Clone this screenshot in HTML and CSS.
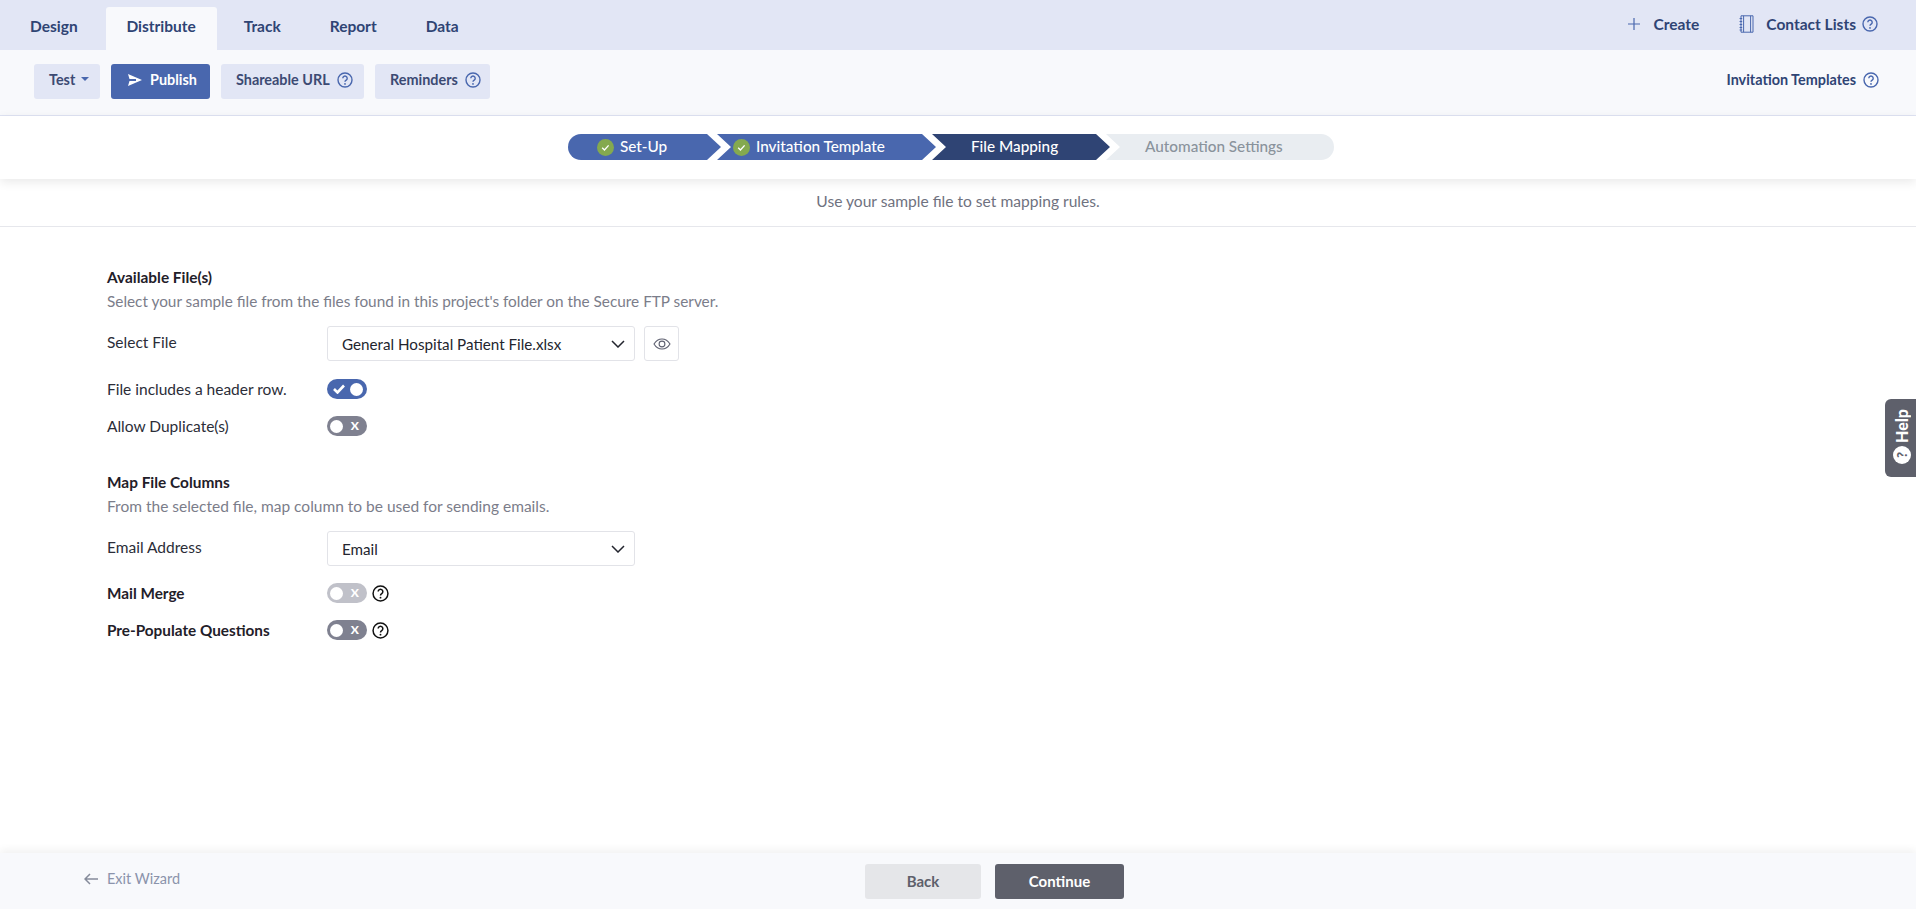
FILE: index.html
```html
<!DOCTYPE html>
<html lang="en">
<head>
<meta charset="utf-8">
<title>File Mapping</title>
<link rel="stylesheet" href="styles.css">
</head>
<body>
<svg class="defs" width="0" height="0" aria-hidden="true">
  <symbol id="q" viewBox="0 0 16 16">
    <circle cx="8" cy="8" r="7" fill="none" stroke="currentColor" stroke-width="1.4"/>
    <path d="M5.8 6.2a2.2 2.2 0 1 1 3.4 1.9c-.8.5-1.200.9-1.200 1.700" fill="none" stroke="currentColor" stroke-width="1.400"/>
    <circle cx="8" cy="11.900" r=".9" fill="currentColor"/>
  </symbol>
  <symbol id="chev" viewBox="0 0 14 8">
    <path d="M1 1l6 6 6-6" fill="none" stroke="currentColor" stroke-width="1.500"/>
  </symbol>
  <symbol id="ok" viewBox="0 0 18 18">
    <circle cx="9" cy="9" r="9" fill="#84a94f"/>
    <path d="M5.500 9.300l2.400 2.400 4.400-5" fill="none" stroke="#fff" stroke-width="1.400"/>
  </symbol>
</svg>

<header class="topbar">
  <nav class="tabs">
    <a class="tab">Design</a>
    <a class="tab tab-active">Distribute</a>
    <a class="tab">Track</a>
    <a class="tab">Report</a>
    <a class="tab">Data</a>
  </nav>
  <div class="top-actions">
    <a class="top-link">
      <svg class="ico-plus" viewBox="0 0 14 14"><path d="M7 1v12M1 7h12" stroke="currentColor" stroke-width="1.200" fill="none"/></svg>
      <span>Create</span>
    </a>
    <a class="top-link top-contact">
      <svg class="ico-book" viewBox="0 0 15 18"><path d="M2 .8h12v16.400H2zM4.600.8v16.400M11.600.8v16.400M.6 3.500h2.600M.6 6.500h2.600M.6 9.500h2.600M.6 12.500h2.600M.6 15h2.600" stroke="currentColor" stroke-width="1" fill="none"/></svg>
      <span>Contact Lists</span>
      <svg class="q q-blue q-tight"><use href="#q"/></svg>
    </a>
  </div>
</header>

<section class="toolbar">
  <div class="tool-group">
    <button class="btn btn-soft btn-test">Test<i class="caret"></i></button>
    <button class="btn btn-primary">
      <svg class="ico-send" viewBox="0 0 14 12"><path d="M0 0l14 6-14 6 1.500-5H8V5H1.500z" fill="currentColor"/></svg>
      Publish
    </button>
    <button class="btn btn-soft btn-share">Shareable URL<svg class="q q-blue"><use href="#q"/></svg></button>
    <button class="btn btn-soft btn-remind">Reminders<svg class="q q-blue"><use href="#q"/></svg></button>
  </div>
  <a class="tpl-link">Invitation Templates<svg class="q q-blue"><use href="#q"/></svg></a>
</section>

<section class="stepper-wrap">
  <ol class="stepper">
    <li class="step step-first step-done step-a"><svg class="ok"><use href="#ok"/></svg>Set-Up</li>
    <li class="step step-done step-b"><svg class="ok"><use href="#ok"/></svg>Invitation Template</li>
    <li class="step step-current step-c">File Mapping</li>
    <li class="step step-last step-todo step-d">Automation Settings</li>
  </ol>
</section>

<p class="subtitle">Use your sample file to set mapping rules.</p>

<main class="content">
  <h2 class="sec-title">Available File(s)</h2>
  <p class="sec-desc">Select your sample file from the files found in this project's folder on the Secure FTP server.</p>
  <div class="row row-select">
    <label class="lbl">Select File</label>
    <div class="select"><span>General Hospital Patient File.xlsx</span><svg class="chev"><use href="#chev"/></svg></div>
    <button class="eye-btn">
      <svg class="eye" viewBox="0 0 18 12"><path d="M1 6c2-3.300 4.800-5 8-5s6 1.700 8 5c-2 3.300-4.800 5-8 5s-6-1.700-8-5z" fill="none" stroke="currentColor" stroke-width="1.100"/><circle cx="9" cy="6" r="2.900" fill="none" stroke="currentColor" stroke-width="1.100"/></svg>
    </button>
  </div>
  <div class="row row-toggle">
    <label class="lbl">File includes a header row.</label>
    <span class="toggle toggle-on"><svg class="tick" viewBox="0 0 12 10"><path d="M1 5l3.500 3.500L11 1.500" fill="none" stroke="currentColor" stroke-width="2.600"/></svg><i class="knob"></i></span>
  </div>
  <div class="row row-toggle row-dup">
    <label class="lbl">Allow Duplicate(s)</label>
    <span class="toggle toggle-off"><i class="knob"></i><b class="x">X</b></span>
  </div>

  <h2 class="sec-title sec-second">Map File Columns</h2>
  <p class="sec-desc sec-desc-b">From the selected file, map column to be used for sending emails.</p>
  <div class="row row-select">
    <label class="lbl">Email Address</label>
    <div class="select"><span>Email</span><svg class="chev"><use href="#chev"/></svg></div>
  </div>
  <div class="row row-toggle row-merge">
    <label class="lbl lbl-strong">Mail Merge</label>
    <span class="toggle toggle-off toggle-disabled"><i class="knob"></i><b class="x">X</b></span>
    <svg class="q q-black"><use href="#q"/></svg>
  </div>
  <div class="row row-toggle row-dup">
    <label class="lbl lbl-strong">Pre-Populate Questions</label>
    <span class="toggle toggle-off"><i class="knob"></i><b class="x">X</b></span>
    <svg class="q q-black"><use href="#q"/></svg>
  </div>
</main>

<footer class="footer">
  <a class="exit">
    <svg class="ico-back" viewBox="0 0 14 12"><path d="M6 1L1 6l5 5M1 6h13" fill="none" stroke="currentColor" stroke-width="1.500"/></svg>
    Exit Wizard
  </a>
  <div class="foot-btns">
    <button class="foot-btn foot-back">Back</button>
    <button class="foot-btn foot-next">Continue</button>
  </div>
</footer>

<aside class="help"><span class="help-q">?</span><span class="help-t">Help</span></aside>
</body>
</html>
```

FILE: styles.css
```css
* { box-sizing: border-box; }
html, body { height: 100%; }
body {
  margin: 0;
  display: flex;
  flex-direction: column;
  height: 909px;
  overflow: hidden;
  background: #fff;
  font-family: "Lato", "Liberation Sans", sans-serif;
  font-size: 15px;
  color: #2b2d38;
}
.defs { position: absolute; }
button { font-family: inherit; border: 0; cursor: pointer; }
h2, p, ol { margin: 0; padding: 0; }

.topbar {
  height: 50px;
  flex: none;
  display: flex;
  justify-content: space-between;
  background: #e2e6f5;
  padding-left: 8px;
  color: #2f4474;
}
.tabs { display: flex; gap: 5px; padding-top: 7px; }
.tab {
  display: flex;
  align-items: center;
  height: 43px;
  padding: 0 22px 6px;
  font-weight: 700;
  font-size: 15.5px;
  color: #2f4474;
  border-radius: 3px 3px 0 0;
}
.tab:first-child { padding-right: 23px; }
.tab-active { background: #f8f9fc; width: 111px; justify-content: center; padding: 0 0 6px; }
.top-actions { display: flex; align-items: center; padding: 0 38px 2px 0; gap: 40px; }
.top-link { display: flex; align-items: center; font-weight: 700; font-size: 15.5px; color: #2f4474; }
.ico-plus { width: 14px; height: 14px; margin-right: 13px; color: #4967ae; }
.ico-book { width: 15px; height: 18px; margin-right: 12px; color: #4967ae; }
.q { width: 16px; height: 16px; flex: none; }
.q-blue { color: #4967ae; margin-left: 7px; }
.q-tight { margin-left: 6px; }
.q-black { color: #111; width: 17px; height: 17px; margin-left: 5px; }

.toolbar {
  height: 66px;
  flex: none;
  display: flex;
  align-items: flex-start;
  justify-content: space-between;
  background: #f8f9fc;
  border-bottom: 1px solid #dfe3f3;
  padding: 14px 37px 0 34px;
  color: #2f4474;
}
.tool-group { display: flex; gap: 11px; }
.btn {
  display: flex;
  align-items: center;
  height: 35px;
  padding: 0 14px 4px 15px;
  border-radius: 3px;
  font-size: 14.400px;
  font-weight: 700;
  white-space: nowrap;
}
.btn-soft { background: #e2e6f5; color: #3c4a73; }
.btn-share { width: 143px; }
.btn-remind { width: 115px; }
.btn-test { width: 66px; padding-left: 15px; padding-bottom: 5px; }
.caret {
  width: 0; height: 0;
  margin-left: 6px;
  border-left: 4px solid transparent;
  border-right: 4px solid transparent;
  border-top: 4px solid #4967ae;
}
.btn-primary { background: #4967ae; color: #fff; width: 99px; padding: 0 0 4px 17px; }
.ico-send { width: 14px; height: 12px; margin-right: 8px; }
.tpl-link { display: flex; align-items: center; height: 35px; padding-bottom: 4px; font-size: 14.400px; font-weight: 700; color: #2f4474; }

.stepper-wrap {
  height: 63px;
  flex: none;
  position: relative;
  padding: 18px 14px 0 0;
  box-shadow: 0 3px 10px rgba(0,0,0,.09);
  background: #fff;
}
.stepper { list-style: none; display: flex; justify-content: center; }
.step {
  display: flex;
  align-items: center;
  height: 26px;
  padding-bottom: 2px;
  font-size: 15.300px;
  font-weight: 500;
  color: #fff;
  --tip: 14px;
  clip-path: polygon(0 0, calc(100% - var(--tip)) 0, 100% 50%, calc(100% - var(--tip)) 100%, 0 100%, var(--tip) 50%);
  margin-left: -4px;
}
.step-first {
  margin-left: 0;
  border-radius: 13px 0 0 13px;
  clip-path: polygon(0 0, calc(100% - var(--tip)) 0, 100% 50%, calc(100% - var(--tip)) 100%, 0 100%);
}
.step-last { background: #e9edf1; border-radius: 0 13px 13px 0; }
.step-done { background: #4967ae; }
.step-current { background: #2f4474; }
.step-todo { color: #8a939c; }
.step-a { width: 153px; padding-left: 29px; }
.step-b { width: 219px; padding-left: 16px; }
.step-c { width: 178px; padding-left: 39px; }
.step-d {
  width: 228px;
  padding-left: 39px;
  clip-path: polygon(0 0, 100% 0, 100% 100%, 0 100%, var(--tip) 50%);
}
.ok { width: 17px; height: 17px; margin: 2px 6px 0 0; }

.subtitle {
  height: 48px;
  flex: none;
  display: flex;
  align-items: center;
  justify-content: center;
  padding-bottom: 3px;
  border-bottom: 1px solid #e6e7ec;
  color: #6f7280;
  font-size: 15.600px;
}

.content { flex: 1; padding: 40px 0 0 107px; }
.sec-title { font-size: 15.400px; font-weight: 700; color: #1f2029; line-height: 20px; }
.sec-second { margin-top: 36px; }
.sec-desc { margin-top: 4px; color: #7b7d8a; font-size: 15.350px; line-height: 20px; }
.sec-desc-b { font-size: 15.500px; }
.row { display: flex; align-items: center; }
.lbl { width: 220px; flex: none; font-size: 15.500px; color: #2b2d38; }
.lbl-strong { font-weight: 700; color: #1f2029; font-size: 15.300px; }
.row-select { margin-top: 15px; }
.row-select .lbl { align-self: flex-start; padding-top: 7px; }
.select {
  width: 308px;
  height: 35px;
  display: flex;
  align-items: center;
  justify-content: space-between;
  padding: 0 9px 0 14px;
  background: #fff;
  border: 1px solid #e2e3e8;
  border-radius: 3px;
  font-size: 15.200px;
  color: #23252e;
}
.chev { width: 14px; height: 8px; color: #23252e; }
.eye-btn {
  width: 35px; height: 35px;
  margin-left: 9px;
  padding: 0;
  display: flex;
  align-items: center;
  justify-content: center;
  background: #fff;
  border: 1px solid #e2e3e8;
  border-radius: 3px;
  color: #5e6070;
}
.eye { width: 18px; height: 12px; }
.row-toggle { margin-top: 18px; height: 20px; }
.row-dup { margin-top: 17px; }
.row-merge { margin-top: 17px; }
.toggle {
  position: relative;
  width: 40px;
  height: 20px;
  flex: none;
  display: flex;
  align-items: center;
  justify-content: space-between;
  border-radius: 10px;
  color: #fff;
}
.toggle-on { background: #4967ae; padding: 0 4px 0 6px; }
.toggle-off { background: #7f8190; padding: 0 8px 0 3px; }
.toggle-disabled { background: #c0c1c9; }
.knob { width: 13px; height: 13px; border-radius: 50%; background: #fff; display: block; flex: none; }
.tick { width: 12px; height: 10px; }
.x { font-size: 12px; font-weight: 900; line-height: 1; }

.footer {
  height: 56px;
  flex: none;
  display: grid;
  grid-template-columns: 1fr auto 1fr;
  align-items: center;
  background: #f8f9fc;
  box-shadow: 0 -3px 8px rgba(0,0,0,.06);
  padding: 0 11px 0 84px;
}
.exit { display: flex; align-items: center; color: #8b93ab; font-size: 14.500px; padding-bottom: 5px; }
.ico-back { width: 14px; height: 12px; margin-right: 9px; color: #858b9a; }
.foot-btns { display: flex; gap: 14px; }
.foot-btn { height: 35px; border-radius: 3px; font-size: 15px; font-weight: 700; }
.foot-back { width: 116px; background: #e5e6e9; color: #5e606b; }
.foot-next { width: 129px; background: #5e606b; color: #fff; }

.help {
  position: fixed;
  right: 0;
  top: 399px;
  width: 31px;
  height: 78px;
  display: flex;
  flex-direction: column-reverse;
  align-items: center;
  justify-content: flex-end;
  gap: 3px;
  padding: 10px 0 11px 3px;
  background: #5e606b;
  color: #fff;
  border-radius: 6px 0 0 6px;
  font-weight: 900;
  font-size: 16px;
}
.help-t { writing-mode: vertical-rl; transform: rotate(180deg); line-height: 1; }
.help-q {
  width: 18px;
  height: 18px;
  border-radius: 50%;
  background: #fff;
  color: #5e606b;
  font-size: 13px;
  line-height: 18px;
  text-align: center;
  transform: rotate(-90deg);
}
```
